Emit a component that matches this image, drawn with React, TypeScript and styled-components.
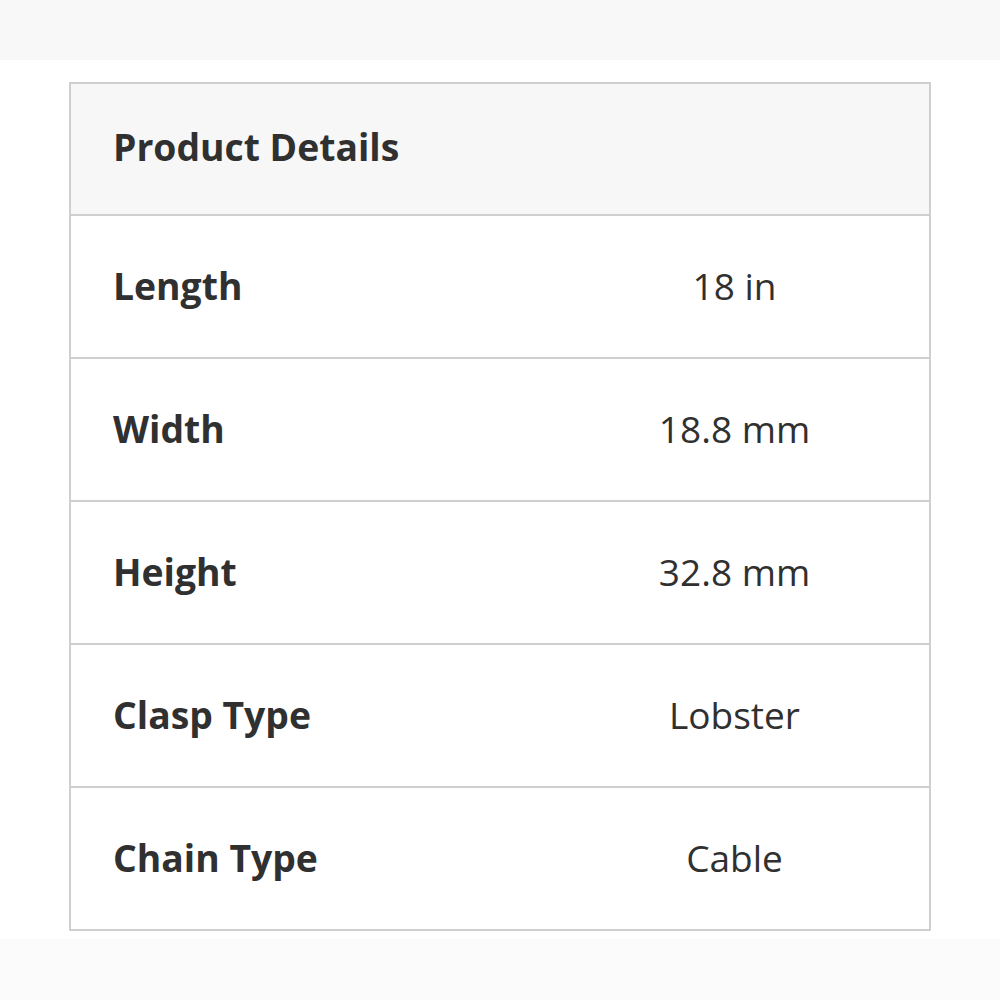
import React from 'react';
import styled, { createGlobalStyle } from 'styled-components';

const GlobalStyle = createGlobalStyle`
    html, body {
        margin: 0;
        padding: 0;
        background: #ffffff;
        font-family: "Open Sans", "Noto Sans", sans-serif;
    }
`;

const Page = styled.div`
    width: 1000px;
    height: 1000px;
    display: flex;
    flex-direction: column;
    background: #ffffff;
`;

const Band = styled.div<{ $h: number; $tone: string }>`
    height: ${(p) => p.$h}px;
    flex-shrink: 0;
    background: ${(p) => p.$tone};
`;

const Table = styled.div`
    margin: 22px 69px 0 69px;
    border: 2px solid #cfcfcf;
    display: flex;
    flex-direction: column;
`;

const Header = styled.div`
    height: 132px;
    box-sizing: border-box;
    padding: 0 0 5px 42px;
    background: #f7f7f7;
    border-bottom: 2px solid #cfcfcf;
    display: flex;
    align-items: center;
    font-size: 37.3px;
    font-weight: 700;
    color: #303030;
`;

const Row = styled.div`
    height: 143px;
    box-sizing: border-box;
    padding-bottom: 3px;
    display: grid;
    grid-template-columns: 469px 1fr;
    align-items: center;
    border-bottom: 2px solid #cfcfcf;
    &:last-child {
        height: 141px;
        border-bottom: none;
    }
`;

const Label = styled.div`
    padding-left: 42px;
    font-size: 37.3px;
    font-weight: 700;
    color: #303030;
`;

const Value = styled.div`
    text-align: center;
    font-size: 37px;
    font-weight: 400;
    color: #303030;
`;

const details = [
    { label: 'Length', value: '18 in' },
    { label: 'Width', value: '18.8 mm' },
    { label: 'Height', value: '32.8 mm' },
    { label: 'Clasp Type', value: 'Lobster' },
    { label: 'Chain Type', value: 'Cable' },
];

const App = () => {
    return (
        <Page>
            <GlobalStyle />
            <Band $h={60} $tone="#f8f8f8" />
            <Table>
                <Header>Product Details</Header>
                {details.map((d) => (
                    <Row key={d.label}>
                        <Label>{d.label}</Label>
                        <Value>{d.value}</Value>
                    </Row>
                ))}
            </Table>
            <Band $h={8} $tone="#ffffff" />
            <Band $h={61} $tone="#fbfbfb" />
        </Page>
    );
};

export default App;
